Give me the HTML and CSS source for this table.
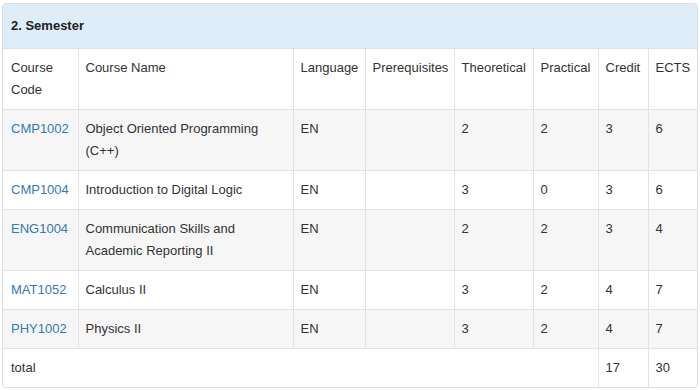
FILE: index.html
```html
<!DOCTYPE html>
<html>
<head>
<meta charset="utf-8">
<link rel="stylesheet" href="styles.css">
</head>
<body>
<div class="panel">
  <div class="panel-heading">2. Semester</div>
  <table class="course-table">
    <colgroup>
      <col class="c-code"><col class="c-name"><col class="c-lang"><col class="c-pre">
      <col class="c-theo"><col class="c-prac"><col class="c-cred"><col class="c-ects">
    </colgroup>
    <thead>
      <tr>
        <th>Course Code</th><th>Course Name</th><th>Language</th><th>Prerequisites</th>
        <th>Theoretical</th><th>Practical</th><th>Credit</th><th>ECTS</th>
      </tr>
    </thead>
    <tbody>
      <tr class="striped">
        <td><a href="#">CMP1002</a></td><td>Object Oriented Programming (C++)</td><td>EN</td><td></td>
        <td>2</td><td>2</td><td>3</td><td>6</td>
      </tr>
      <tr>
        <td><a href="#">CMP1004</a></td><td>Introduction to Digital Logic</td><td>EN</td><td></td>
        <td>3</td><td>0</td><td>3</td><td>6</td>
      </tr>
      <tr class="striped">
        <td><a href="#">ENG1004</a></td><td>Communication Skills and Academic Reporting II</td><td>EN</td><td></td>
        <td>2</td><td>2</td><td>3</td><td>4</td>
      </tr>
      <tr>
        <td><a href="#">MAT1052</a></td><td>Calculus II</td><td>EN</td><td></td>
        <td>3</td><td>2</td><td>4</td><td>7</td>
      </tr>
      <tr class="striped">
        <td><a href="#">PHY1002</a></td><td>Physics II</td><td>EN</td><td></td>
        <td>3</td><td>2</td><td>4</td><td>7</td>
      </tr>
      <tr class="total">
        <td colspan="6">total</td><td>17</td><td>30</td>
      </tr>
    </tbody>
  </table>
</div>
</body>
</html>
```

FILE: styles.css
```css
html, body {
  margin: 0;
  padding: 0;
  background: #ffffff;
}
body {
  font-family: "Liberation Sans", Arial, Helvetica, sans-serif;
  font-size: 13px;
  line-height: 22px;
  color: #333333;
}
.panel {
  margin: 3px 2px 0 2px;
  border: 1px solid #dcdcdc;
  border-radius: 4px;
  overflow: hidden;
  background: #fff;
}
.panel-heading {
  background: #dfedf9;
  border-bottom: 1px solid #d6e2ec;
  padding: 11px 8px;
  font-weight: bold;
  color: #222;
}
.course-table {
  width: 100%;
  border-collapse: collapse;
  table-layout: fixed;
}
.c-code { width: 75px; }
.c-name { width: 215px; }
.c-lang { width: 72px; }
.c-pre { width: 89px; }
.c-theo { width: 79px; }
.c-prac { width: 65px; }
.c-cred { width: 50px; }
.c-ects { width: auto; }
.course-table th,
.course-table td {
  border: 1px solid #e3e3e3;
  padding: 8px 7px;
  text-align: left;
  vertical-align: top;
  font-weight: normal;
}
.course-table tr > :first-child { border-left: none; padding-left: 8px; }
.course-table tr > :last-child { border-right: none; }
.course-table thead tr:first-child th { border-top: none; }
.course-table tr.total td { border-bottom: none; }
.course-table tr.striped td { background: #f6f6f6; }
.course-table a {
  color: #337ab7;
  text-decoration: none;
}
```
